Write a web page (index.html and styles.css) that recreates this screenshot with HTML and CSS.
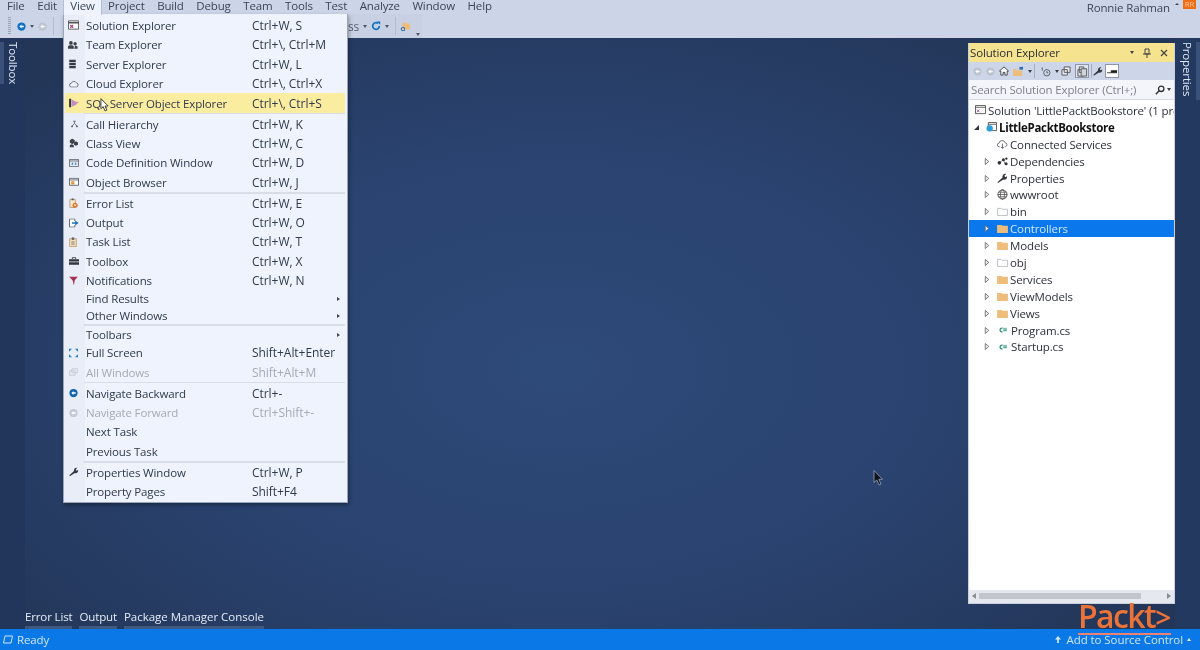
FILE: index.html
```html
<!DOCTYPE html>
<html lang="en">
<head>
<meta charset="utf-8">
<title>Visual Studio</title>
<link rel="stylesheet" href="styles.css">
</head>
<body>
<svg class="defs" width="0" height="0">
<symbol id="folder" viewBox="0 0 12 10"><path d="M0 1h5l1 1h6v8H0z" fill="#eebd7c"/></symbol>
<symbol id="folder-empty" viewBox="0 0 12 10"><path d="M.5 1.500h4l1 1h6v7H.5z" fill="#fff" stroke="#b9bdc4"/></symbol>
<symbol id="arrow" viewBox="0 0 6 8"><path d="M1 .5l4 3.500-4 3.500z" fill="#e9eaec" stroke="#6b6f76"/></symbol>
<symbol id="cs" viewBox="0 0 12 8"><path d="M6 1.500A2.600 2.600 0 1 0 6 6.500" fill="none" stroke="#1f8a70" stroke-width="1.600"/><path d="M8 1v5M10.500 1v5M7 2.600h5M7 4.600h5" stroke="#1f8a70" stroke-width=".8"/></symbol>
<symbol id="wrench" viewBox="0 0 12 12"><path d="M1 11l-.5-1L6 4.800C5.500 3 7 .5 10 1L8 3l1 1.500L11 3.500c.5 3-2.500 4.500-4 3.700z" fill="#33363c"/></symbol>
<symbol id="nav" viewBox="0 0 12 12"><circle cx="6" cy="6" r="5.500" fill="currentColor"/><path d="M3 6l3-2.600V5h3v2H6v1.600z" fill="#fff"/></symbol>
</svg>
<div class="app">
  <nav class="menubar">
    <span class="mi">File</span><span class="mi">Edit</span><span class="mi active">View</span><span class="mi">Project</span><span class="mi">Build</span><span class="mi">Debug</span><span class="mi">Team</span><span class="mi">Tools</span><span class="mi">Test</span><span class="mi">Analyze</span><span class="mi">Window</span><span class="mi">Help</span>
    <span class="user">Ronnie Rahman<i class="caret"></i><b class="avatar">RR</b></span>
  </nav>
  <div class="toolbar">
    <div class="tb-left">
      <span class="grip"></span>
      <svg class="tb" width="9" height="9"><use href="#nav" color="#0e70c0"/></svg>
      <i class="tcaret"></i>
      <svg class="tb" width="9" height="9"><use href="#nav" color="#bfc5d0"/></svg>
      <span class="tsep"></span>
    </div>
    <div class="tb-tail"><span class="tb-text">ss</span><i class="tcaret"></i>
      <svg width="10" height="10" viewBox="0 0 12 12"><path d="M10 6a4 4 0 1 1-1.500-3.100" fill="none" stroke="#0e70c0" stroke-width="2"/><path d="M7 .5h4v4z" fill="#0e70c0"/></svg>
      <i class="tcaret"></i><span class="tsep"></span>
      <svg width="11" height="11" viewBox="0 0 13 13"><path d="M3 2h4l1 1h4v7H3z" fill="#eebd7c"/><circle cx="3.500" cy="9.500" r="2" fill="none" stroke="#2d6fb4" stroke-width="1.200"/></svg>
      <i class="tcaret low"></i></div>
  </div>
  <main class="workspace">
    <aside class="rail left"><span class="vtab">Toolbox</span></aside>
    <div class="center">
      <div class="bottomtabs"><span class="btab">Error List</span><span class="btab">Output</span><span class="btab wide">Package Manager Console</span></div>
    </div>
    <section class="explorer">
      <header class="ex-title"><span>Solution Explorer</span>
        <span class="ex-ctrls"><i class="tcaret dark"></i>
          <svg width="8" height="10" viewBox="0 0 8 10"><path d="M2 1h4v5H2zM0 6h8M4 6v4" fill="none" stroke="#444" stroke-width="1"/></svg>
          <svg width="8" height="8" viewBox="0 0 8 8"><path d="M1 1l6 6M7 1L1 7" stroke="#444" stroke-width="1.200"/></svg></span>
      </header>
      <div class="ex-tools">
        <svg class="xt" width="9" height="9"><use href="#nav" color="#bcc3cf"/></svg>
        <svg class="xt" width="9" height="9"><use href="#nav" color="#bcc3cf"/></svg>
        <svg class="xt" width="10" height="10" viewBox="0 0 11 11"><path d="M5.500 1L.5 5.500H2V10h2.500V7h2v3H9V5.500h1.500z" fill="#fff" stroke="#3d4046"/></svg>
        <svg class="xt" width="11" height="10" viewBox="0 0 12 11"><path d="M0 3h4v2h6v6H0z" fill="#eebd7c"/><path d="M7 1h4v3H7z" fill="#2d6fb4"/></svg>
        <i class="tcaret dark"></i><span class="xsep"></span>
        <svg class="xt" width="10" height="11" viewBox="0 0 12 12"><circle cx="7" cy="7.500" r="3.800" fill="none" stroke="#4a4e55"/><path d="M7 5.500v2h1.700M1.500 1v4" stroke="#4a4e55" fill="none"/></svg>
        <i class="tcaret dark"></i>
        <svg class="xt pull" width="10" height="10" viewBox="0 0 11 11"><path d="M3.500 1h6.500v6H3.500zM1 4h6v6H1z" fill="#e8ebf2" stroke="#555"/></svg>
        <span class="xbtn"><svg width="11" height="11" viewBox="0 0 12 12"><path d="M2.500 1h5v6h-5zM1 4h6v7H1z" fill="#dfe3ea" stroke="#555"/><path d="M4.500 3h6v8h-6z" fill="#cfd4de" stroke="#555"/></svg></span>
        <span class="xsep tight"></span>
        <svg class="xt tight" width="10" height="11"><use href="#wrench"/></svg>
        <span class="xbtn white"><svg width="10" height="5" viewBox="0 0 12 6"><path d="M0 4.500h12M5 2h7v2H5z" stroke="#222" fill="#222"/></svg></span>
      </div>
      <div class="ex-search"><span>Search Solution Explorer (Ctrl+;)</span>
        <span class="ex-find"><svg width="10" height="10" viewBox="0 0 10 10"><circle cx="6.200" cy="3.800" r="2.700" fill="none" stroke="#333" stroke-width="1.300"/><path d="M4.200 5.800L.8 9.200" stroke="#333" stroke-width="1.500"/></svg><i class="tcaret dark"></i></span>
      </div>
      <div class="tree">
        <div class="node sol"><span class="twist"></span><svg class="ni" width="11" height="10" viewBox="0 0 12 11"><path d="M.5.500h11v9h-11z" fill="#fff" stroke="#555"/><path d="M.5 2.500h11" stroke="#555"/><path d="M2 5l3 3M5 5L2 8" stroke="#a04a9c"/></svg><span class="nowrap">Solution 'LittlePacktBookstore' (1 project)</span></div>
        <div class="node proj"><span class="twist open"></span><svg class="ni" width="11" height="10" viewBox="0 0 12 11"><path d="M2.500.500h9v9h-9z" fill="#fff" stroke="#555"/><path d="M2.500 2.500h9" stroke="#555"/><circle cx="4" cy="7" r="3.500" fill="#2b9fd8"/></svg><span>LittlePacktBookstore</span></div>
        <div class="node"><span class="twist"></span><svg class="ni" width="11" height="9" viewBox="0 0 12 10"><path d="M3 7.500H2.500a2 2 0 0 1-.3-4A3.400 3.400 0 0 1 8.800 3a2.300 2.300 0 0 1 .5 4.500H9" fill="#fff" stroke="#62666d"/><path d="M6 4v5M4.300 7.500L6 9.500l1.700-2" fill="none" stroke="#62666d"/></svg><span>Connected Services</span></div>
        <div class="node"><svg class="twist" width="6" height="7"><use href="#arrow"/></svg><svg class="ni" width="11" height="9" viewBox="0 0 12 10"><path d="M3 6l4-3M7 3l2 5" stroke="#555" stroke-width=".7"/><circle cx="2.500" cy="6.500" r="2" fill="#2f3238"/><circle cx="7" cy="3" r="1.700" fill="#2f3238"/><circle cx="10" cy="7.500" r="1.700" fill="#2f3238"/><circle cx="10.300" cy="1.800" r="1.300" fill="#2f3238"/></svg><span>Dependencies</span></div>
        <div class="node"><svg class="twist" width="6" height="7"><use href="#arrow"/></svg><svg class="ni" width="11" height="11"><use href="#wrench"/></svg><span>Properties</span></div>
        <div class="node"><svg class="twist" width="6" height="7"><use href="#arrow"/></svg><svg class="ni" width="11" height="11" viewBox="0 0 12 12"><circle cx="6" cy="6" r="5" fill="none" stroke="#444"/><ellipse cx="6" cy="6" rx="2.200" ry="5" fill="none" stroke="#444" stroke-width=".8"/><path d="M1 6h10M1.800 3.500h8.400M1.800 8.500h8.400" stroke="#444" stroke-width=".8"/></svg><span>wwwroot</span></div>
        <div class="node"><svg class="twist" width="6" height="7"><use href="#arrow"/></svg><svg class="ni" width="11" height="9"><use href="#folder-empty"/></svg><span>bin</span></div>
        <div class="node sel"><svg class="twist" width="6" height="7"><use href="#arrow"/></svg><svg class="ni" width="11" height="9"><use href="#folder"/></svg><span>Controllers</span></div>
        <div class="node"><svg class="twist" width="6" height="7"><use href="#arrow"/></svg><svg class="ni" width="11" height="9"><use href="#folder"/></svg><span>Models</span></div>
        <div class="node"><svg class="twist" width="6" height="7"><use href="#arrow"/></svg><svg class="ni" width="11" height="9"><use href="#folder-empty"/></svg><span>obj</span></div>
        <div class="node"><svg class="twist" width="6" height="7"><use href="#arrow"/></svg><svg class="ni" width="11" height="9"><use href="#folder"/></svg><span>Services</span></div>
        <div class="node"><svg class="twist" width="6" height="7"><use href="#arrow"/></svg><svg class="ni" width="11" height="9"><use href="#folder"/></svg><span>ViewModels</span></div>
        <div class="node"><svg class="twist" width="6" height="7"><use href="#arrow"/></svg><svg class="ni" width="11" height="9"><use href="#folder"/></svg><span>Views</span></div>
        <div class="node"><svg class="twist" width="6" height="7"><use href="#arrow"/></svg><svg class="ni cs" width="9" height="6"><use href="#cs"/></svg><span>Program.cs</span></div>
        <div class="node"><svg class="twist" width="6" height="7"><use href="#arrow"/></svg><svg class="ni cs" width="9" height="6"><use href="#cs"/></svg><span>Startup.cs</span></div>
      </div>
      <div class="ex-scroll"><i class="sl"></i><span class="thumb"></span><i class="sr"></i></div>
    </section>
    <aside class="rail right"><span class="vtab">Properties</span></aside>
  </main>
  <footer class="status">
    <svg width="10" height="9" viewBox="0 0 10 9"><path d="M2 1h7.500L8 8H.5z" fill="none" stroke="#cfe6ff"/></svg>
    <span class="ready">Ready</span>
    <span class="source"><svg width="6" height="7" viewBox="0 0 7 8"><path d="M3.500 0L7 4H4.500v4h-2V4H0z" fill="#d5e9ff"/></svg><span>Add to Source Control</span><i class="upcaret"></i></span>
  </footer>
  <div class="packt">Packt<span class="gt">&gt;</span></div>
  <svg class="mouse" width="11" height="16" viewBox="0 0 11 16"><path d="M1 .5v12l2.800-2.500L6 15l2-.9-2.200-4.800H9.500z" fill="#10141d" stroke="#9aa6ba" stroke-width=".8"/></svg>

  <div class="menu">
    <div class="row"><svg class="ic" width="11" height="11" viewBox="0 0 12 12"><path d="M.5 1.500h11v9H.5z" fill="#fff" stroke="#555"/><path d="M.5 3.500h11" stroke="#555" stroke-width="1.500"/><path d="M2.500 6l3 3M5.500 6l-3 3" stroke="#b1418f" stroke-width="1.300"/></svg><span class="lb">Solution Explorer</span><span class="sc">Ctrl+W, S</span></div>
    <div class="row"><svg class="ic" width="10" height="10" viewBox="0 0 12 11"><circle cx="3.500" cy="3" r="2.200" fill="#3e4249"/><circle cx="8.500" cy="4" r="2" fill="#3e4249"/><path d="M0 10V7.500c0-1 1-1.700 3.500-1.700S7 6.500 7 7.500V10zM7.500 10h4V8c0-1-.8-1.700-3-1.700z" fill="#3e4249"/></svg><span class="lb">Team Explorer</span><span class="sc">Ctrl+\, Ctrl+M</span></div>
    <div class="row"><svg class="ic nudge" width="7" height="9" viewBox="0 0 8 11"><path d="M0 0h8v3H0zM0 4h8v3H0zM0 8h8v3H0z" fill="#3a3d44"/></svg><span class="lb">Server Explorer</span><span class="sc">Ctrl+W, L</span></div>
    <div class="row"><svg class="ic nudge" width="10" height="7" viewBox="0 0 12 9"><path d="M3 8.500a2.500 2.500 0 0 1-.4-5A3.500 3.500 0 0 1 9 3a2.800 2.800 0 0 1 0 5.500z" fill="#eef3fd" stroke="#4c5058"/></svg><span class="lb">Cloud Explorer</span><span class="sc">Ctrl+\, Ctrl+X</span></div>
    <div class="row hot"><svg class="ic" width="10" height="9" viewBox="0 0 12 11"><path d="M0 0h2.500v11H0z" fill="#33363c"/><path d="M3 1l5 3h4L8 8l-5 2z" fill="#c58ac0"/></svg><span class="lb">SQL Server Object Explorer</span><span class="sc">Ctrl+\, Ctrl+S</span>
      <svg class="cursor" width="10" height="14" viewBox="0 0 11 15"><path d="M1 .5v11l2.500-2.200L5.500 14l2-.9-2-4.500H9z" fill="#fff" stroke="#333"/></svg></div>
    <hr class="sep">
    <div class="row"><svg class="ic small" width="7" height="8" viewBox="0 0 10 10"><path d="M3 1h4M5 1v3M5 4L1.500 8M5 4l3.500 4" stroke="#4b4f57" fill="none"/><circle cx="1.500" cy="8.500" r="1.200" fill="#4b4f57"/><circle cx="8.500" cy="8.500" r="1.200" fill="#4b4f57"/></svg><span class="lb">Call Hierarchy</span><span class="sc">Ctrl+W, K</span></div>
    <div class="row"><svg class="ic nudge" width="9" height="9" viewBox="0 0 11 11"><path d="M1 2l3-2 3 2v3L4 7 1 5z" fill="#3e4249"/><path d="M6 5l2.500-1.500L11 5v2.500L8.500 9 6 7.500zM1 8l2.500-1L6 8.500v2.500H1z" fill="#3e4249"/></svg><span class="lb">Class View</span><span class="sc">Ctrl+W, C</span></div>
    <div class="row"><svg class="ic nudge" width="10" height="8" viewBox="0 0 12 10"><path d="M.5.500h11v9H.5z" fill="#f3f6fd" stroke="#4c5058"/><path d="M.5 2.500h11" stroke="#4c5058"/><path d="M3 4.500h2v3H3zM7 4.500h2v3H7z" fill="#4d8ec9"/></svg><span class="lb">Code Definition Window</span><span class="sc">Ctrl+W, D</span></div>
    <div class="row"><svg class="ic nudge" width="10" height="9" viewBox="0 0 12 11"><path d="M.5 1h11v8.500H.5z" fill="#fff" stroke="#4c5058"/><path d="M.5 3h11" stroke="#4c5058"/><path d="M2.500 4.500h4v4h-4z" fill="#e29a3d"/></svg><span class="lb">Object Browser</span><span class="sc">Ctrl+W, J</span></div>
    <hr class="sep">
    <div class="row"><svg class="ic nudge" width="9" height="11" viewBox="0 0 10 12"><path d="M1 2h6v9H1z" fill="#f5e6d0" stroke="#bb9d76"/><path d="M3 1h2v2H3z" fill="#555"/><circle cx="6.800" cy="8.500" r="2.800" fill="#e2711d"/><path d="M6 7.500l1.700 2M7.700 7.500L6 9.500" stroke="#fff"/></svg><span class="lb">Error List</span><span class="sc">Ctrl+W, E</span></div>
    <div class="row"><svg class="ic nudge" width="10" height="9" viewBox="0 0 12 11"><path d="M7 3V.5H.5v10H7V8" fill="#fff" stroke="#4c5058"/><path d="M3.500 4.500h4V2.500L11.500 5.500l-4 3V6.500h-4z" fill="#1c6fb7"/></svg><span class="lb">Output</span><span class="sc">Ctrl+W, O</span></div>
    <div class="row"><svg class="ic nudge" width="8" height="10" viewBox="0 0 9 12"><path d="M.5 2h8v9.500h-8z" fill="#f3dfc0" stroke="#c09b68"/><path d="M3 .5h3v3H3z" fill="#666"/><path d="M2.500 6h4M2.500 8.500h4" stroke="#666"/></svg><span class="lb">Task List</span><span class="sc">Ctrl+W, T</span></div>
    <div class="row"><svg class="ic nudge" width="10" height="8" viewBox="0 0 12 9"><path d="M4 2.500V.5h4v2" fill="none" stroke="#33363c"/><path d="M0 2.500h12V5H0zM0 6h12v3H0z" fill="#33363c"/></svg><span class="lb">Toolbox</span><span class="sc">Ctrl+W, X</span></div>
    <div class="row"><svg class="ic nudge" width="9" height="9" viewBox="0 0 11 11"><path d="M0 0h11L7 4.500 6 11 4.500 5z" fill="#a5304f"/></svg><span class="lb">Notifications</span><span class="sc">Ctrl+W, N</span></div>
    <div class="row slim"><span class="lb">Find Results</span><i class="sub"></i></div>
    <div class="row slim"><span class="lb">Other Windows</span><i class="sub"></i></div>
    <hr class="sep">
    <div class="row slim"><span class="lb">Toolbars</span><i class="sub"></i></div>
    <div class="row"><svg class="ic nudge" width="9" height="9" viewBox="0 0 10 10"><path d="M0 0h3.500L0 3.500zM10 0H6.500L10 3.500zM0 10h3.500L0 6.500zM10 10H6.500L10 6.500z" fill="#1c7ac4"/></svg><span class="lb">Full Screen</span><span class="sc">Shift+Alt+Enter</span></div>
    <div class="row off"><svg class="ic nudge" width="9" height="8" viewBox="0 0 11 9"><path d="M3.500.5h7v5h-7zM.5 3h7v5.500h-7z" fill="#e4e9f3" stroke="#c3c8d2"/></svg><span class="lb">All Windows</span><span class="sc">Shift+Alt+M</span></div>
    <hr class="sep">
    <div class="row"><svg class="ic nudge" width="9" height="9"><use href="#nav" color="#0e63ad"/></svg><span class="lb">Navigate Backward</span><span class="sc">Ctrl+-</span></div>
    <div class="row off"><svg class="ic nudge" width="9" height="9"><use href="#nav" color="#c3c8d2"/></svg><span class="lb">Navigate Forward</span><span class="sc">Ctrl+Shift+-</span></div>
    <div class="row"><span class="lb">Next Task</span></div>
    <div class="row"><span class="lb">Previous Task</span></div>
    <hr class="sep">
    <div class="row"><svg class="ic nudge" width="10" height="10"><use href="#wrench"/></svg><span class="lb">Properties Window</span><span class="sc">Ctrl+W, P</span></div>
    <div class="row"><span class="lb">Property Pages</span><span class="sc">Shift+F4</span></div>
  </div>
</div>
</body>
</html>
```
FILE: styles.css
```css
* { box-sizing: border-box; }
html, body { margin: 0; height: 100%; overflow: hidden; }
body { font-family: "Open Sans", "Noto Sans", sans-serif; font-size: 11.500px; letter-spacing: -.14px; color: #2f3a4c; }
.defs { position: absolute; }
.app { position: relative; width: 1200px; height: 650px; display: flex; flex-direction: column; background: #ccd5e8; overflow: hidden; filter: blur(.35px); }

.menubar { height: 14px; display: flex; align-items: center; background: #ccd5e8; flex: none; position: relative; }
.mi { padding: 0 6.250px; height: 14px; line-height: 11px; color: #3c4656; }
.mi:first-child { padding-left: 7px; }
.mi.active { background: #eef3fd; border: 1px solid #b6bfd0; border-width: 0 1px; padding: 0 6px; height: 15px; position: relative; z-index: 3; }
.user { margin-left: auto; display: flex; align-items: center; color: #3c4656; height: 14px; line-height: 11px; }
.caret { width: 0; height: 0; border: 2.500px solid transparent; border-bottom-color: #444; border-top: 0; margin: -6px 0 0 5px; }
.avatar { width: 13px; height: 9px; margin: -5px 4px 0 4px; background: #ef6c12; color: #f7c8a0; font: 8px/8px "Open Sans", sans-serif; text-align: center; }

.toolbar { height: 24px; display: flex; align-items: center; background: #ccd5e8; flex: none; }
.tb-left { width: 348px; flex: none; display: flex; align-items: center; gap: 4px; padding-left: 8px; }
.grip { width: 3px; height: 18px; margin-right: 2px; background: repeating-linear-gradient(#9aa3b3 0 1px, transparent 1px 2px); }
.tb { flex: none; }
.tcaret { width: 0; height: 0; border: 2.500px solid transparent; border-top: 3px solid #505864; border-bottom: 0; display: inline-block; flex: none; }
.tcaret.dark { border-top-color: #3c3f46; }
.tcaret.low { align-self: flex-end; margin: 0 0 2px 1px; }
.tsep { width: 1px; height: 18px; background: #b4bccc; margin-left: 2px; }
.tb-tail { display: flex; align-items: center; gap: 4px; height: 24px; color: #5a6372; background: #c8d1e3; padding-right: 2px; }
.tb-text { font-size: 12px; }

.workspace { flex: 1; display: flex; background: radial-gradient(ellipse 720px 430px at 560px 330px, #2e4a78 0%, #2a4370 50%, #233658 100%); min-height: 0; }
.rail { width: 25px; flex: none; color: #dfe7f5; background: #22365b; }
.rail.right { background: linear-gradient(90deg, #24395f 0 21px, #3a5279 21px); background-size: 100% 58px; background-repeat: no-repeat; background-position: 0 4px; background-color: #24395f; }
.vtab { display: block; writing-mode: vertical-rl; line-height: 14px; white-space: nowrap; }
.rail.left .vtab { margin-top: 4px; height: 42px; background: linear-gradient(90deg, #3a5279 0 4px, transparent 4px); padding-left: 6px; }
.rail.right .vtab { padding: 4px 0 0 5px; height: 60px; }
.center { flex: 1; display: flex; flex-direction: column; justify-content: flex-end; min-width: 0; }
.bottomtabs { display: flex; gap: 7px; }
.btab { color: #e4ebf7; height: 20px; line-height: 15px; padding-bottom: 5px; border-bottom: 3px solid #42597f; white-space: nowrap; }
.btab.wide { letter-spacing: -.02px; }

.explorer { width: 207px; flex: none; margin: 5px 0 25px 0; display: flex; flex-direction: column; background: #fff; border: 1px solid #c8cfdd; border-top: 0; overflow: hidden; }
.ex-title { height: 19px; flex: none; background: #f6e38f; display: flex; align-items: center; padding-left: 1px; color: #2b2f36; justify-content: space-between; }
.ex-ctrls { display: flex; align-items: center; gap: 9px; padding-right: 6px; }
.ex-tools { height: 18px; flex: none; background: #cdd6e8; display: flex; align-items: center; gap: 4px; padding-left: 4px; }
.xt { flex: none; }
.xt.pull { margin-left: -2px; }
.xt.tight { margin-right: -2px; }
.xsep { width: 1px; height: 14px; background: #a6aec0; margin: 0 2px 0 -2px; flex: none; }
.xsep.tight { margin-right: -3px; }
.xbtn { width: 14px; height: 14px; flex: none; display: flex; align-items: center; justify-content: center; border: 1px solid #8e96a8; background: #dfe4ef; }
.xbtn.white { background: #fff; }
.ex-search { height: 19px; flex: none; background: #f4f5fa; display: flex; align-items: center; justify-content: space-between; padding: 0 3px 0 2px; color: #7d828c; }
.ex-find { display: flex; align-items: center; gap: 2px; }
.tree { flex: 1; padding-top: 2px; border-top: 1px solid #d7dbe4; min-height: 0; overflow: hidden; }
.node { height: 16.900px; display: flex; align-items: center; white-space: nowrap; color: #2c3038; padding-left: 15px; }
.twist { width: 6px; flex: none; margin-right: 7px; display: block; }
.twist.open { width: 0; height: 0; border-style: solid; border-width: 0 0 5px 5px; border-color: transparent transparent #33363c transparent; margin: 0 7px 0 -4px; }
.ni { flex: none; margin-right: 2px; }
.ni.cs { margin: 0 4px 0 1px; }
.nowrap { white-space: nowrap; }
.node.sol { padding-left: 6px; }
.node.sol .twist { display: none; }
.node.proj { padding-left: 9px; }
.node.proj span:last-child { font-weight: 700; color: #111; letter-spacing: -.3px; }
.node.sel { background: #0a78ec; color: #cfe6ff; }
.ex-scroll { height: 13px; flex: none; background: #e6e8ef; display: flex; align-items: center; padding: 0 3px 2px; gap: 3px; }
.thumb { width: 162px; height: 6px; background: #c2c5cc; margin-right: auto; }
.sl, .sr { width: 0; height: 0; border: 3px solid transparent; }
.sl { border-right: 4px solid #8a8e96; border-left: 0; }
.sr { border-left: 4px solid #8a8e96; border-right: 0; }

.status { height: 21px; flex: none; background: #0a78e6; color: #cfe6ff; display: flex; align-items: center; padding-left: 3px; gap: 4px; }
.ready { line-height: 21px; }
.source { margin-left: auto; display: flex; align-items: center; gap: 6px; padding-right: 9px; letter-spacing: -.08px; }
.upcaret { width: 0; height: 0; border: 2.500px solid transparent; border-bottom: 3px solid #e6f1ff; border-top: 0; margin-left: -2px; }
.packt { position: absolute; left: 1078px; top: 598px; width: 93px; font: 600 32px/36px "Open Sans", sans-serif; letter-spacing: -1.600px; color: #e97339; height: 37px; border-bottom: 2px solid #ec8272; white-space: nowrap; }
.packt .gt { font-size: 28px; font-weight: 600; }
.mouse { position: absolute; left: 873px; top: 470px; }

.menu { position: absolute; left: 63px; top: 14px; width: 285px; height: 489px; padding-top: 1.800px; background: linear-gradient(90deg, #e8edf8 0 21px, #eef3fd 21px); border: 1px solid #9ca5b6; border-top: 0; box-shadow: 1px 2px 4px rgba(0,0,0,.35); z-index: 2; }
.row { height: 19.400px; display: flex; align-items: center; position: relative; color: #2f3a4c; margin-right: 2px; }
.row.slim { height: 17px; }
.ic { position: absolute; left: 4px; top: 50%; transform: translateY(-50%); }
.ic.nudge { left: 5px; }
.ic.small { left: 7px; }
.lb { margin-left: 22px; width: 166px; white-space: nowrap; }
.sc { white-space: nowrap; font-size: 12px; letter-spacing: -.05px; }
.row.hot { background: #fbeda0; margin: 0 2px 0 1px; }
.row.hot .lb { margin-left: 21px; }
.row.off, .row.off .sc { color: #a5abb6; }
.sep { margin: 0 2px 0 20px; height: 1.600px; border: 0; background: #d8dde8; }
.sub { position: absolute; right: 5px; top: 50%; margin-top: -2px; width: 0; height: 0; border: 2px solid transparent; border-left: 3px solid #3c4656; border-right: 0; }
.cursor { position: absolute; left: 35px; top: 5px; }
```
